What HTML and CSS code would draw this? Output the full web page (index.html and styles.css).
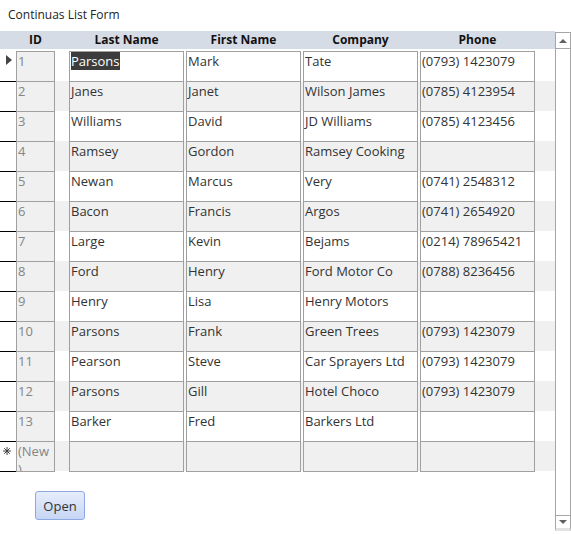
FILE: index.html
```html
<!DOCTYPE html>
<html lang="en">
<head>
    <meta charset="UTF-8">
    <title>Continuas List Form</title>
    <link rel="stylesheet" href="styles.css">
</head>
<body>

<div class="title">Continuas List Form</div>

<div class="form">
    <div class="sheet">
        <div class="head">
            <div class="h-sel"></div>
            <div class="h-id">ID</div>
            <div class="h-field">Last Name</div>
            <div class="h-field">First Name</div>
            <div class="h-field">Company</div>
            <div class="h-field">Phone</div>
        </div>

        <div class="records">
            <div class="row">
                <div class="sel"><svg class="current" width="6" height="10" viewBox="0 0 6 10"><path d="M0 0 L6 5 L0 10 Z" fill="#454545"/></svg></div>
                <div class="line">
                    <div class="cell id">1</div>
                    <div class="cell"><span class="picked">Parsons</span></div>
                    <div class="cell">Mark</div>
                    <div class="cell">Tate</div>
                    <div class="cell">(0793) 1423079</div>
                </div>
            </div>
            <div class="row">
                <div class="sel"></div>
                <div class="line">
                    <div class="cell id">2</div>
                    <div class="cell">Janes</div>
                    <div class="cell">Janet</div>
                    <div class="cell">Wilson James</div>
                    <div class="cell">(0785) 4123954</div>
                </div>
            </div>
            <div class="row">
                <div class="sel"></div>
                <div class="line">
                    <div class="cell id">3</div>
                    <div class="cell">Williams</div>
                    <div class="cell">David</div>
                    <div class="cell">JD Williams</div>
                    <div class="cell">(0785) 4123456</div>
                </div>
            </div>
            <div class="row">
                <div class="sel"></div>
                <div class="line">
                    <div class="cell id">4</div>
                    <div class="cell">Ramsey</div>
                    <div class="cell">Gordon</div>
                    <div class="cell">Ramsey Cooking</div>
                    <div class="cell"></div>
                </div>
            </div>
            <div class="row">
                <div class="sel"></div>
                <div class="line">
                    <div class="cell id">5</div>
                    <div class="cell">Newan</div>
                    <div class="cell">Marcus</div>
                    <div class="cell">Very</div>
                    <div class="cell">(0741) 2548312</div>
                </div>
            </div>
            <div class="row">
                <div class="sel"></div>
                <div class="line">
                    <div class="cell id">6</div>
                    <div class="cell">Bacon</div>
                    <div class="cell">Francis</div>
                    <div class="cell">Argos</div>
                    <div class="cell">(0741) 2654920</div>
                </div>
            </div>
            <div class="row">
                <div class="sel"></div>
                <div class="line">
                    <div class="cell id">7</div>
                    <div class="cell">Large</div>
                    <div class="cell">Kevin</div>
                    <div class="cell">Bejams</div>
                    <div class="cell">(0214) 78965421</div>
                </div>
            </div>
            <div class="row">
                <div class="sel"></div>
                <div class="line">
                    <div class="cell id">8</div>
                    <div class="cell">Ford</div>
                    <div class="cell">Henry</div>
                    <div class="cell">Ford Motor Co</div>
                    <div class="cell">(0788) 8236456</div>
                </div>
            </div>
            <div class="row">
                <div class="sel"></div>
                <div class="line">
                    <div class="cell id">9</div>
                    <div class="cell">Henry</div>
                    <div class="cell">Lisa</div>
                    <div class="cell">Henry Motors</div>
                    <div class="cell"></div>
                </div>
            </div>
            <div class="row">
                <div class="sel"></div>
                <div class="line">
                    <div class="cell id">10</div>
                    <div class="cell">Parsons</div>
                    <div class="cell">Frank</div>
                    <div class="cell">Green Trees</div>
                    <div class="cell">(0793) 1423079</div>
                </div>
            </div>
            <div class="row">
                <div class="sel"></div>
                <div class="line">
                    <div class="cell id">11</div>
                    <div class="cell">Pearson</div>
                    <div class="cell">Steve</div>
                    <div class="cell">Car Sprayers Ltd</div>
                    <div class="cell">(0793) 1423079</div>
                </div>
            </div>
            <div class="row">
                <div class="sel"></div>
                <div class="line">
                    <div class="cell id">12</div>
                    <div class="cell">Parsons</div>
                    <div class="cell">Gill</div>
                    <div class="cell">Hotel Choco</div>
                    <div class="cell">(0793) 1423079</div>
                </div>
            </div>
            <div class="row">
                <div class="sel"></div>
                <div class="line">
                    <div class="cell id">13</div>
                    <div class="cell">Barker</div>
                    <div class="cell">Fred</div>
                    <div class="cell">Barkers Ltd</div>
                    <div class="cell"></div>
                </div>
            </div>
            <!-- blank record for adding a new customer -->
            <div class="row">
                <div class="sel"><svg class="star" width="8" height="8" viewBox="0 0 8 8"><path d="M4 0 V8 M0 4 H8 M1.2 1.2 L6.8 6.8 M6.8 1.2 L1.2 6.8" stroke="#404040" stroke-width="1"/></svg></div>
                <div class="line">
                    <div class="cell id new">(New)</div>
                    <div class="cell"></div>
                    <div class="cell"></div>
                    <div class="cell"></div>
                    <div class="cell"></div>
                </div>
            </div>
        </div>

        <div class="footer">
            <button class="open">Open</button>
        </div>
    </div>

    <div class="scrollbar">
        <div class="sb-up"><span class="tri-up"></span></div>
        <div class="sb-track"></div>
        <div class="sb-down"><span class="tri-down"></span></div>
    </div>
</div>

</body>
</html>
```

FILE: styles.css
```css
body {
    margin: 0;
    font-family: "Open Sans", "Noto Sans", sans-serif;
    font-size: 13px;
    color: #333;
    background: #fff;
}
.title {
    height: 31px;
    padding-left: 8px;
    font-size: 12px;
    line-height: 30px;
    color: #222;
}
.form {
    display: flex;
}
.sheet {
    width: 555px;
}

/* column headers */
.head {
    display: flex;
    height: 18px;
    margin-bottom: 2px;
    background: #d6dce5;
    font-weight: bold;
    font-size: 12px;
    line-height: 17px;
    color: #111;
}
.h-sel {
    width: 16px;
}
.h-id {
    width: 39px;
    margin-right: 14px;
    text-align: center;
}
.h-field {
    width: 115px;
    margin-right: 2px;
    text-align: center;
}

/* records */
.row {
    display: flex;
    height: 30px;
}
.sel {
    flex: none;
    width: 16px;
    height: 31px;
    box-sizing: border-box;
    border-bottom: 1px solid #000;
    padding: 4px 0 0 6px;
}
.sel .star {
    display: block;
    margin: 2px 0 0 -3px;
}
.current {
    display: block;
}
.line {
    display: flex;
    flex: 1;
    height: 30px;
}
.row:nth-child(even) .line {
    background: #f0f0f0;
}
.cell {
    flex: none;
    width: 115px;
    height: 31px;
    margin-right: 2px;
    padding: 0 1px;
    box-sizing: border-box;
    border: 1px solid #a0a0a0;
    background: #fff;
    line-height: 18px;
    white-space: nowrap;
    overflow: hidden;
}
.row:nth-child(even) .cell {
    background: transparent;
}
.cell.id {
    width: 39px;
    margin-right: 14px;
    background: #f0f0f0;
    color: #858585;
}
/* access wraps the placeholder mid-word, closing bracket included */
.cell.new {
    padding-right: 2px;
    white-space: normal;
    line-break: anywhere;
}
.picked {
    background: #3c3c3c;
    color: #fff;
}

.footer {
    padding: 20px 0 0 35px;
}
.open {
    width: 50px;
    height: 29px;
    padding: 0;
    border: 1px solid #8ea9e2;
    border-radius: 3px;
    background: linear-gradient(#e6edfb, #c6d6f5);
    font-family: "Open Sans", "Noto Sans", sans-serif;
    font-size: 13px;
    color: #333;
    cursor: pointer;
}

/* vertical scroll bar */
.scrollbar {
    display: flex;
    flex-direction: column;
    width: 16px;
    height: 499px;
    margin-top: 1px;
    box-sizing: border-box;
    border: 1px solid #a6a6a6;
    border-bottom: 3px solid #e2e2e2;
    background: #fff;
}
.sb-up, .sb-down {
    display: flex;
    align-items: center;
    justify-content: center;
    height: 15px;
}
.sb-up {
    border-bottom: 1px solid #a6a6a6;
}
.sb-down {
    height: 12px;
    border-top: 1px solid #a6a6a6;
}
.sb-track {
    flex: 1;
}
.tri-up {
    border-left: 4px solid transparent;
    border-right: 4px solid transparent;
    border-bottom: 4px solid #606060;
}
.tri-down {
    border-left: 4px solid transparent;
    border-right: 4px solid transparent;
    border-top: 4px solid #606060;
}
```
